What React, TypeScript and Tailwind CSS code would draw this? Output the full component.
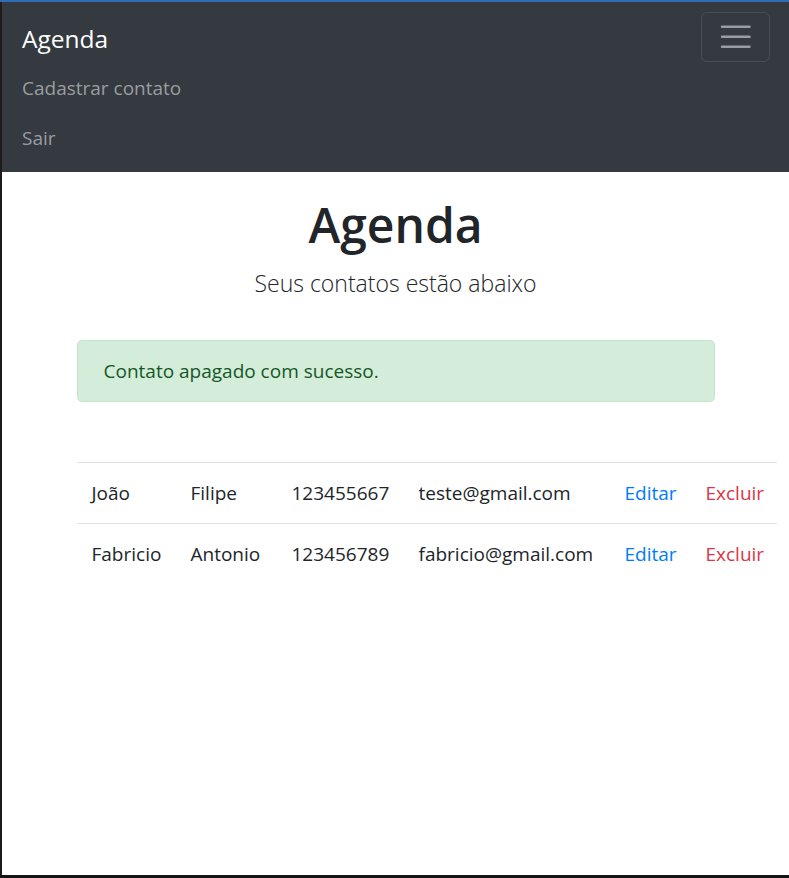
import React from 'react'

const contatos = [
  { nome: 'João', sobrenome: 'Filipe', telefone: '123455667', email: 'teste@gmail.com' },
  { nome: 'Fabricio', sobrenome: 'Antonio', telefone: '123456789', email: 'fabricio@gmail.com' },
]

function Hamburger() {
  return (
    <svg width="37.5" height="37.5" viewBox="0 0 30 30" fill="none">
      <path d="M4 7h22M4 15h22M4 23h22" stroke="rgba(255,255,255,0.5)" strokeWidth="2" strokeLinecap="round" />
    </svg>
  )
}

export default function App() {
  return (
    <div
      className="h-[878px] flex flex-col bg-white text-[#212529] overflow-hidden"
      style={{ fontFamily: '"Segoe UI", "Open Sans", "Liberation Sans", sans-serif' }}
    >
      <div className="h-[2px] bg-[#2f6db5] flex-none" />
      <div className="flex flex-1 min-h-0">
        <div className="w-[2px] bg-[#1c1c1c] flex-none" />
        <div className="flex-1 flex flex-col min-w-0">
          {/* Navbar */}
          <nav className="bg-[#343a40] px-[20px] pt-[10px] pb-[10px] flex-none">
            <div className="flex items-center justify-between h-[50px]">
              <a className="text-white text-[24.5px] leading-[37px] pt-[3px]">Agenda</a>
              <button className="w-[69px] h-[50px] mr-[-1px] border border-white/10 rounded-[6px] flex items-center justify-center">
                <Hamburger />
              </button>
            </div>
            <ul className="flex flex-col">
              <li className="h-[50px] flex items-center pt-[2px] text-[19px] text-[#9a9da0]">Cadastrar contato</li>
              <li className="h-[50px] flex items-center pt-[2px] text-[19px] text-[#9a9da0]">Sair</li>
            </ul>
          </nav>

          {/* Content */}
          <main className="flex-1 min-h-0">
            <div className="w-[638px] mx-auto pt-[23px]">
              <h1 className="text-center text-[48px] leading-[60px] font-semibold mb-[10px]">Agenda</h1>
              <p className="text-center text-[23px] leading-[37px] font-light">Seus contatos estão abaixo</p>

              <div className="mt-[38px] h-[62px] bg-[#d4edda] border border-[#c3e6cb] rounded-[5px] text-[#155724] text-[19px] px-[26px] flex items-center">
                Contato apagado com sucesso.
              </div>

              <table className="mt-[60px] w-[700px] table-fixed border-collapse text-[19px] whitespace-nowrap">
                <colgroup>
                  <col className="w-[99px]" />
                  <col className="w-[101px]" />
                  <col className="w-[127px]" />
                  <col className="w-[206px]" />
                  <col className="w-[81px]" />
                  <col className="w-[86px]" />
                </colgroup>
                <tbody>
                  {contatos.map((c) => (
                    <tr key={c.telefone} className="border-t border-[#dee2e6] h-[61px]">
                      <td className="px-[15px]">{c.nome}</td>
                      <td className="px-[15px]">{c.sobrenome}</td>
                      <td className="px-[15px]">{c.telefone}</td>
                      <td className="px-[15px]">{c.email}</td>
                      <td className="px-[15px] text-[#007bff]">Editar</td>
                      <td className="px-[15px] text-[#dc3545]">Excluir</td>
                    </tr>
                  ))}
                </tbody>
              </table>
            </div>
          </main>
        </div>
      </div>
      <div className="h-[3px] bg-[#141414] flex-none" />
    </div>
  )
}
